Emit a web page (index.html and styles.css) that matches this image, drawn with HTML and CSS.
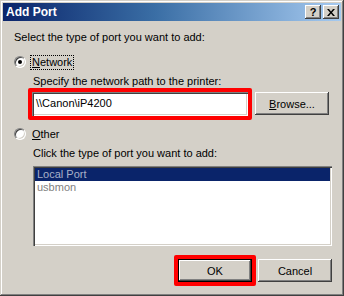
FILE: index.html
```html
<!DOCTYPE html>
<html lang="en">
<head>
    <meta charset="UTF-8">
    <title>Add Port</title>
    <link rel="stylesheet" href="styles.css">
</head>
<body>
    <div class="window">
        <div class="titlebar">
            <span class="title">Add Port</span>
            <div class="title-buttons">
                <span class="tb-btn help">?</span>
                <span class="tb-btn close">
                    <svg width="8" height="7" viewBox="0 0 8 7"><path d="M0 0h2l2 2.5L6 0h2L5 3.5 8 7H6L4 4.5 2 7H0l3-3.5z" fill="#000"/></svg>
                </span>
            </div>
        </div>

        <div class="content">
            <p class="prompt">Select the type of port you want to add:</p>

            <div class="radio-row network-row">
                <span class="radio checked"></span>
                <span class="radio-label focused"><u>N</u>etwork</span>
            </div>
            <div class="group">
                <p class="hint">Specify the network path to the printer:</p>
                <div class="path-row">
                    <div class="highlight path-box">
                        <div class="textbox">\\Canon\iP4200</div>
                    </div>
                    <div class="button browse"><u>B</u>rowse...</div>
                </div>
            </div>

            <div class="radio-row other-row">
                <span class="radio"></span>
                <span class="radio-label"><u>O</u>ther</span>
            </div>
            <div class="group">
                <p class="hint">Click the type of port you want to add:</p>
                <div class="listbox">
                    <div class="list-item selected">Local Port</div>
                    <div class="list-item">usbmon</div>
                </div>
            </div>

            <div class="actions">
                <div class="highlight ok-box">
                    <div class="button default">OK</div>
                </div>
                <div class="button">Cancel</div>
            </div>
        </div>
    </div>
</body>
</html>
```

FILE: styles.css
```css
body {
    margin: 0;
    font-family: 'Liberation Sans', Arial, sans-serif;
    font-size: 11px;
    color: #000;
    background: #d4d0c8;
}

.window {
    width: 344px;
    height: 296px;
    box-sizing: border-box;
    padding: 3px;
    background: #d4d0c8;
    box-shadow: inset -1px -1px #404040, inset 1px 1px #d4d0c8,
                inset -2px -2px #808080, inset 2px 2px #fff;
}

.titlebar {
    height: 18px;
    display: flex;
    align-items: center;
    justify-content: space-between;
    padding: 0 2px 0 3px;
    background: linear-gradient(to right, #0a246a 0%, #3a6ea5 45%, #a6caf0 100%);
}

.title {
    color: #fff;
    font-weight: bold;
    font-size: 12px;
}

.title-buttons {
    display: flex;
    gap: 2px;
}

.tb-btn {
    width: 16px;
    height: 14px;
    box-sizing: border-box;
    display: flex;
    align-items: center;
    justify-content: center;
    background: #d4d0c8;
    font-weight: bold;
    font-size: 11px;
    box-shadow: inset -1px -1px #404040, inset 1px 1px #fff,
                inset -2px -2px #808080, inset 2px 2px #d4d0c8;
}

.content {
    padding: 0 9px 0 11px;
}

p {
    margin: 0;
    line-height: 13px;
}

.prompt {
    margin-top: 10px;
}

.radio-row {
    display: flex;
    align-items: center;
    height: 14px;
}

.network-row {
    margin-top: 11px;
}

.other-row {
    margin-top: 7px;
}

.radio {
    width: 12px;
    height: 12px;
    box-sizing: border-box;
    border-radius: 50%;
    background: #fff;
    border: 1px solid;
    border-color: #808080 #fff #fff #808080;
    box-shadow: inset 1px 1px #404040, inset -1px -1px #d4d0c8;
    position: relative;
}

.radio.checked::after {
    content: '';
    position: absolute;
    left: 3px;
    top: 3px;
    width: 4px;
    height: 4px;
    border-radius: 50%;
    background: #000;
}

.radio-label {
    margin-left: 5px;
    padding: 0 1px;
    line-height: 13px;
}

.radio-label.focused {
    outline: 1px dotted #000;
}

.group {
    padding-left: 19px;
}

.hint {
    margin-top: 6px;
}

.path-row {
    display: flex;
    align-items: flex-start;
    margin-left: -5px;
}

.highlight {
    border: 4px solid #f00;
    border-radius: 2px;
}

.path-box {
    width: 216px;
}

.textbox {
    height: 24px;
    box-sizing: border-box;
    padding: 0 4px;
    line-height: 22px;
    background: #fff;
    box-shadow: inset 1px 1px #808080, inset 2px 2px #404040,
                inset -1px -1px #fff, inset -2px -2px #d4d0c8;
}

.button {
    width: 74px;
    height: 23px;
    box-sizing: border-box;
    display: flex;
    align-items: center;
    justify-content: center;
    background: #d4d0c8;
    box-shadow: inset -1px -1px #404040, inset 1px 1px #fff,
                inset -2px -2px #808080, inset 2px 2px #d4d0c8;
}

.browse {
    margin-left: 3px;
    margin-top: 4px;
}

.listbox {
    margin-top: 6px;
    height: 80px;
    box-sizing: border-box;
    padding: 2px;
    background: #fff;
    box-shadow: inset 1px 1px #808080, inset 2px 2px #404040,
                inset -1px -1px #fff, inset -2px -2px #d4d0c8;
}

.list-item {
    height: 13px;
    line-height: 13px;
    padding-left: 2px;
    color: #808080;
}

.list-item.selected {
    background: #0a246a;
    color: #a8b0c8;
}

.actions {
    display: flex;
    justify-content: flex-end;
    align-items: center;
    gap: 2px;
    margin-top: 9px;
}

.ok-box {
    border-radius: 2px;
}

.button.default {
    box-shadow: inset 0 0 0 1px #000, inset -2px -2px #404040, inset 2px 2px #fff,
                inset -3px -3px #808080;
}
```
